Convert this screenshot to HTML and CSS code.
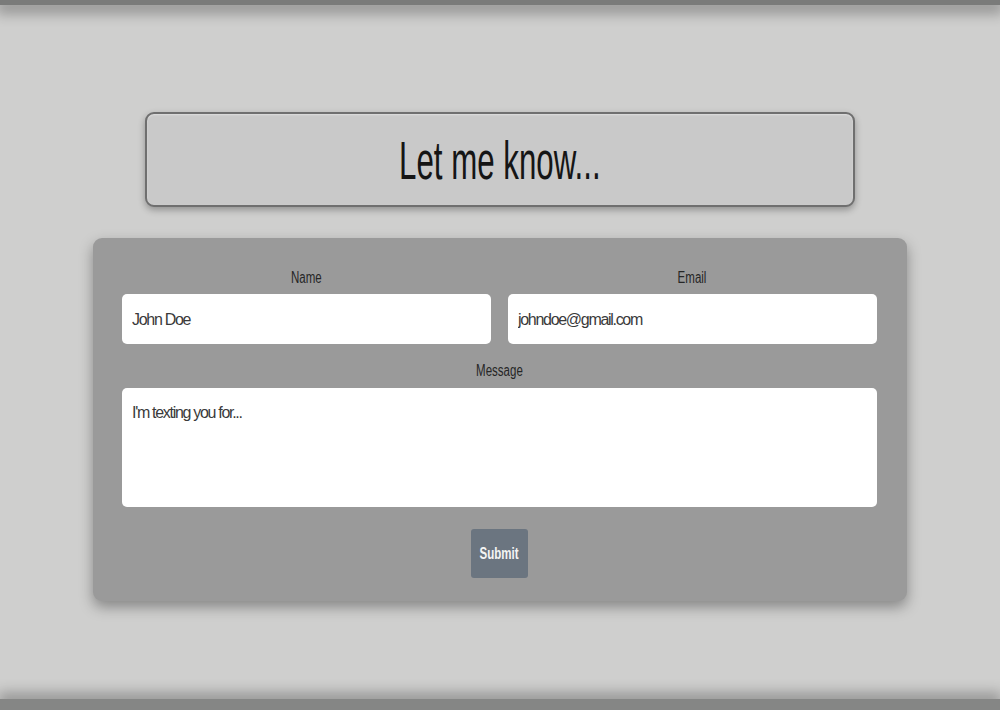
FILE: index.html
```html
<!DOCTYPE html>
<html lang="en">
<head>
<meta charset="utf-8">
<title>Let me know</title>
<link rel="stylesheet" href="styles.css">
</head>
<body>
<div class="topbar"></div>
<main class="page">
  <header class="title-card">
    <h1 class="title"><span class="squeeze title-text">Let me know...</span></h1>
  </header>
  <form class="form-card">
    <div class="row">
      <div class="field">
        <label class="label" for="name"><span class="squeeze">Name</span></label>
        <input class="input" id="name" type="text" value="John Doe">
      </div>
      <div class="field">
        <label class="label" for="email"><span class="squeeze">Email</span></label>
        <input class="input" id="email" type="text" value="johndoe@gmail.com">
      </div>
    </div>
    <div class="field field-message">
      <label class="label" for="msg"><span class="squeeze">Message</span></label>
      <textarea class="input textarea" id="msg">I'm texting you for...</textarea>
    </div>
    <div class="actions">
      <button class="submit" type="button"><span class="squeeze">Submit</span></button>
    </div>
  </form>
</main>
<div class="bottombar"></div>
</body>
</html>
```
FILE: styles.css
```css
* { box-sizing: border-box; }
html, body { margin: 0; padding: 0; }
body {
  width: 1000px;
  height: 710px;
  overflow: hidden;
  background: #cfcfce;
  font-family: "Liberation Sans", Arial, sans-serif;
  display: flex;
  flex-direction: column;
}
.topbar {
  height: 5px;
  flex: none;
  background: #7a7b7a;
  box-shadow: 0 4px 14px 4px rgba(0,0,0,0.32);
}
.bottombar {
  height: 11px;
  flex: none;
  margin-top: auto;
  background: #858685;
  box-shadow: 0 -4px 14px 2px rgba(0,0,0,0.3);
}
.page {
  flex: 1;
  display: flex;
  flex-direction: column;
  align-items: center;
  padding-top: 107px;
}
.title-card {
  width: 710px;
  height: 95px;
  background: #c9c9c9;
  border: 2px solid #6f6f6f;
  border-radius: 9px;
  box-shadow: 0 3px 7px rgba(0,0,0,0.3), inset 0 1px 2px rgba(255,255,255,0.4);
  display: flex;
  align-items: center;
  justify-content: center;
}
.title {
  margin: 0;
  font-weight: normal;
  font-size: 53px;
  line-height: 1;
  color: #151515;
  white-space: nowrap;
  position: relative;
  top: 1px;
}
.squeeze {
  display: inline-block;
  white-space: nowrap;
  transform: scaleX(0.72);
}
.title-text { transform: scaleX(0.59); }
.form-card {
  width: 814px;
  height: 363px;
  margin-top: 31px;
  background: #9a9a9a;
  border-radius: 9px;
  box-shadow: 0 6px 14px rgba(0,0,0,0.35);
  padding: 31px 30px 0 29px;
  display: flex;
  flex-direction: column;
}
.row {
  display: grid;
  grid-template-columns: 369px 369px;
  gap: 17px;
}
.field {
  display: flex;
  flex-direction: column;
}
.label {
  text-align: center;
  font-size: 16px;
  line-height: 18px;
  height: 18px;
  color: #262626;
  margin-bottom: 7px;
}
.input {
  height: 50px;
  border: none;
  border-radius: 5px;
  background: #ffffff;
  font-family: "Liberation Sans", Arial, sans-serif;
  font-size: 16px;
  letter-spacing: -1.3px;
  color: #3a3a3a;
  padding: 2px 10px 0;
  outline: none;
}
.field-message { margin-top: 18px; }
.field-message .label { margin-bottom: 8px; }
.textarea {
  height: 119px;
  resize: none;
  padding: 16px 10px;
  line-height: 18px;
}
.actions {
  display: flex;
  justify-content: center;
  margin-top: 22px;
}
.submit {
  width: 57px;
  height: 49px;
  border: none;
  border-radius: 3px;
  background: #6b7580;
  color: #f4f4f4;
  font-family: "Liberation Sans", Arial, sans-serif;
  font-weight: bold;
  font-size: 16px;
  padding: 0;
}
```
